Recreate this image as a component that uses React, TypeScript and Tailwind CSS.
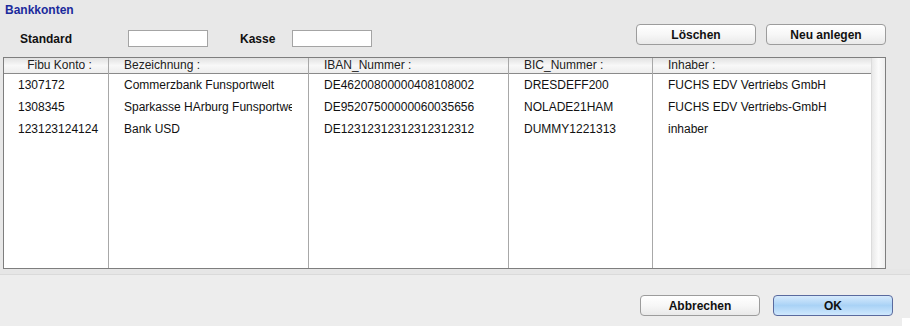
import React from 'react';

type Column = {
  label: string;
  width: string;
  center?: boolean;
};

const columns: Column[] = [
  { label: 'Fibu Konto :', width: 'w-[105px]', center: true },
  { label: 'Bezeichnung :', width: 'w-[200px]' },
  { label: 'IBAN_Nummer :', width: 'w-[200px]' },
  { label: 'BIC_Nummer :', width: 'w-[144px]' },
  { label: 'Inhaber :', width: 'flex-1' },
];

const rows: string[][] = [
  ['1307172', 'Commerzbank Funsportwelt', 'DE46200800000408108002', 'DRESDEFF200', 'FUCHS EDV Vertriebs GmbH'],
  ['1308345', 'Sparkasse HArburg Funsportwelt', 'DE95207500000060035656', 'NOLADE21HAM', 'FUCHS EDV Vertriebs-GmbH'],
  ['123123124124', 'Bank USD', 'DE12312312312312312312', 'DUMMY1221313', 'inhaber'],
];

function MacButton({ label, primary = false }: { label: string; primary?: boolean }) {
  return (
    <button
      className={`w-[120px] h-[21px] rounded-[4px] border text-[12px] font-bold text-[#111] leading-none ${
        primary
          ? 'border-[#5a6a9e] bg-gradient-to-b from-[#d6eafc] via-[#a9d2f6] to-[#cfe8fd]'
          : 'border-[#9c9c9c] bg-gradient-to-b from-white via-[#f7f7f7] to-[#e9e9e9]'
      }`}
    >
      {label}
    </button>
  );
}

export default function App() {
  return (
    <div className="w-[910px] h-[326px] bg-[#e8e8e8] flex flex-col font-['Liberation_Sans',Arial,sans-serif] text-[12px] text-[#111] overflow-hidden">
      {/* Top bar */}
      <div className="h-[57px] flex justify-between">
        <div className="flex flex-col pl-[5px] pt-[3px]">
          <div className="text-[#1b2a9c] font-bold leading-[15px]">Bankkonten</div>
          <div className="flex items-center mt-[12px] h-[17px]">
            <span className="ml-[15px] w-[108px] font-bold">Standard</span>
            <div className="w-[80px] h-[17px] bg-white border border-[#a4a4a4]" />
            <span className="ml-[32px] w-[52px] font-bold">Kasse</span>
            <div className="w-[80px] h-[17px] bg-white border border-[#a4a4a4]" />
          </div>
        </div>
        <div className="flex gap-[10px] pt-[24px] pr-[24px]">
          <MacButton label="Löschen" />
          <MacButton label="Neu anlegen" />
        </div>
      </div>

      {/* Table */}
      <div className="ml-[3px] w-[883px] h-[212px] border border-[#7e7e7e] bg-white flex">
        <div className="flex-1 flex">
          {columns.map((col, ci) => (
            <div
              key={col.label}
              className={`${col.width} flex flex-col ${ci < columns.length - 1 ? 'border-r border-[#a8a8a8]' : ''}`}
            >
              <div
                className={`h-[16px] shrink-0 border-b border-[#8a8a8a] bg-gradient-to-b from-[#e2e2e2] via-[#f8f8f8] to-[#ededed] leading-[15px] text-[#222] whitespace-nowrap ${
                  col.center ? 'text-center pl-[7px]' : 'pl-[15px]'
                }`}
              >
                {col.label}
              </div>
              {rows.map((row, ri) => (
                <div
                  key={ri}
                  className={`h-[22px] leading-[22px] whitespace-nowrap overflow-hidden ${
                    ci === 0 ? 'pl-[14px]' : 'pl-[15px] pr-[16px]'
                  }`}
                >
                  <div className="overflow-hidden">{row[ci]}</div>
                </div>
              ))}
            </div>
          ))}
        </div>
        <div className="w-[14px] border-l border-[#dcdcdc] bg-gradient-to-r from-[#e9e9e9] via-[#fbfbfb] to-[#efefef]" />
      </div>

      {/* Bottom bar */}
      <div className="h-[5px] bg-[#e6e6e6]" />
      <div className="flex-1 bg-[#ededed] border-t border-[#dadada] flex justify-end items-start pt-[20px] pr-[17px] gap-[13px] relative">
        <MacButton label="Abbrechen" />
        <MacButton label="OK" primary />
        <div className="absolute right-0 bottom-0 w-[8px] h-[8px] bg-white" />
      </div>
    </div>
  );
}
